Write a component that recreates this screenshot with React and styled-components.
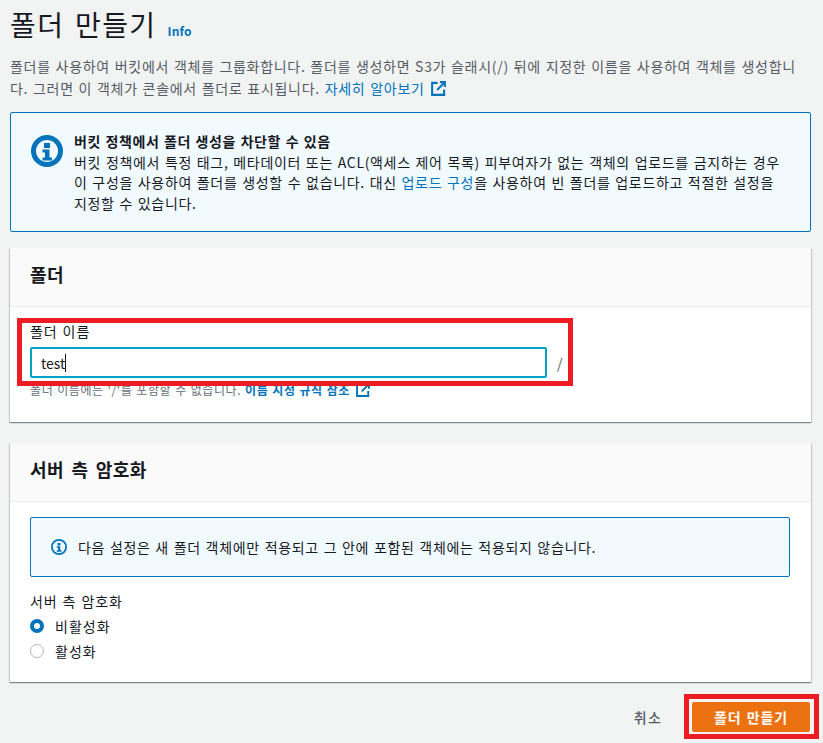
import React from "react";
import styled, { createGlobalStyle } from "styled-components";

const Global = createGlobalStyle`
  html, body { margin: 0; padding: 0; background: #f2f3f3; }
  body { font-family: "Noto Sans CJK KR", "Noto Sans", sans-serif; color: #16191f; }
  * { box-sizing: border-box; }
`;

const Page = styled.div`
  position: relative;
  width: 823px;
  height: 743px;
  overflow: hidden;
  padding: 4px 12px 0 10px;
`;
const TitleRow = styled.div`
  display: flex;
  align-items: baseline;
  gap: 11px;
  height: 44px;
`;
const Title = styled.h1`
  margin: 0;
  font-size: 28px;
  line-height: 40px;
  font-weight: 400;
  letter-spacing: 1.4px;
  word-spacing: 3px;
  color: #16191f;
`;
const InfoLink = styled.a`
  font-size: 12px;
  font-weight: 700;
  letter-spacing: 0.2px;
  color: #0073bb;
`;
const Description = styled.p`
  margin: 7px 0 0;
  font-size: 14px;
  line-height: 22px;
  letter-spacing: 0.7px;
  word-spacing: 1px;
  color: #545b64;
`;
const Link = styled.a`
  color: #0073bb;
  font-weight: ${(p) => (p.$bold ? 700 : 400)};
`;
const External = styled.svg`
  display: inline-block;
  width: ${(p) => p.$size || 15}px;
  height: ${(p) => p.$size || 15}px;
  margin-left: 6px;
  vertical-align: -2px;
`;
const Alert = styled.div`
  display: flex;
  background: #f1faff;
  border: 1px solid #0073bb;
  border-radius: 2px;
  gap: 11px;
  align-items: ${(p) => (p.$small ? "center" : "flex-start")};
  height: ${(p) => (p.$small ? 60 : 120)}px;
  margin-top: ${(p) => (p.$small ? 0 : 13)}px;
  padding: ${(p) => (p.$small ? "0 20px" : "18px 26px 0 20px")};
`;
const AlertIconSlot = styled.div`
  flex: none;
  margin-top: ${(p) => p.$top || 0}px;
  display: flex;
`;
const AlertText = styled.div`
  font-size: 14px;
  line-height: 20.5px;
  letter-spacing: 0.67px;
  word-spacing: 1px;
  color: #16191f;
`;
const AlertTitle = styled.div`
  font-weight: 700;
  letter-spacing: 0.55px;
`;
const Panel = styled.section`
  background: #fff;
  box-shadow: 0 1px 1px 0 rgba(0, 28, 36, 0.3), 1px 1px 1px 0 rgba(0, 28, 36, 0.15), -1px 1px 1px 0 rgba(0, 28, 36, 0.15);
  margin-top: ${(p) => p.$top}px;
  height: ${(p) => p.$height}px;
`;
const PanelHeader = styled.header`
  height: 59px;
  background: #fafafa;
  border-bottom: 1px solid #eaeded;
  padding: 0 20px 6px;
  display: flex;
  align-items: center;
`;
const PanelTitle = styled.h2`
  margin: 0;
  font-size: 18px;
  font-weight: 700;
  line-height: 24px;
  letter-spacing: 0.4px;
  word-spacing: 3px;
`;
const PanelBody = styled.div`
  padding: ${(p) => p.$pad};
`;
const Label = styled.div`
  font-size: 14px;
  line-height: 20px;
  letter-spacing: 0.9px;
  word-spacing: 1px;
  color: #16191f;
`;
const InputRow = styled.div`
  display: flex;
  align-items: center;
  gap: 10px;
  margin-top: 6px;
`;
const FakeInput = styled.div`
  width: 517px;
  height: 31px;
  border: 2px solid #00a1c9;
  border-radius: 2px;
  padding: 0 9px;
  display: flex;
  align-items: center;
  font-size: 14px;
  color: #16191f;
  background: #fff;
`;
const Caret = styled.span`
  display: inline-block;
  width: 1px;
  height: 18px;
  background: #16191f;
`;
const Slash = styled.span`
  font-size: 14px;
  color: #545b64;
`;
const Hint = styled.div`
  margin-top: 3px;
  font-size: 12px;
  line-height: 18px;
  letter-spacing: 0.6px;
  word-spacing: 0.6px;
  color: #687078;
`;
const FieldLabel = styled(Label)`
  margin-top: 14px;
`;
const RadioRow = styled.div`
  display: flex;
  align-items: center;
  gap: 11px;
  height: 25px;
  font-size: 14px;
  letter-spacing: 1px;
  color: #16191f;
`;
const RadioGroup = styled.div`
  margin-top: 2px;
`;
const Radio = styled.span`
  width: 14px;
  height: 14px;
  border-radius: 50%;
  background: #fff;
  border: ${(p) => (p.$on ? "4px solid #0073bb" : "1px solid #aab7b8")};
`;
const Footer = styled.footer`
  display: flex;
  align-items: center;
  justify-content: flex-end;
  margin-top: 20px;
  height: 30px;
  padding-right: 1px;
`;
const Cancel = styled.span`
  font-size: 14px;
  font-weight: 500;
  letter-spacing: 1.2px;
  color: #545b64;
  margin-right: 30px;
`;
const Primary = styled.button`
  width: 118px;
  height: 30px;
  border: 1px solid #ec7211;
  border-radius: 2px;
  background: #ec7211;
  color: #fff;
  font-family: inherit;
  font-size: 14px;
  font-weight: 700;
  letter-spacing: 0.9px;
  word-spacing: 1px;
  padding: 0;
`;
const Highlight = styled.div`
  position: absolute;
  border: 5px solid #ed1c24;
  left: ${(p) => p.$l}px;
  top: ${(p) => p.$t}px;
  width: ${(p) => p.$w}px;
  height: ${(p) => p.$h}px;
`;

const ExternalIcon = ({ size }) => (
  <External $size={size} viewBox="0 0 16 16" fill="none" stroke="#0073bb" strokeWidth="2.2">
    <path d="M7 2H1.2v12.8H14V9" />
    <path d="M9.5 1.2h5.3v5.3" />
    <path d="M14.5 1.5 6.5 9.5" />
  </External>
);

const InfoIcon = ({ size, sw }) => (
  <svg width={size} height={size} viewBox="0 0 32 32" style={{ flex: "none" }}>
    <circle cx="16" cy="16" r={16 - sw / 2} fill="none" stroke="#0073bb" strokeWidth={sw} />
    <rect x="13" y="8" width="6" height="5" fill="#0073bb" />
    <path d="M11.5 14.5h7v8h2.5v3H11.5v-3h2.5v-5h-2.5z" fill="#0073bb" />
  </svg>
);

export default function App() {
  return (
    <Page>
      <Global />
      <TitleRow>
        <Title>폴더 만들기</Title>
        <InfoLink>Info</InfoLink>
      </TitleRow>
      <Description>
        폴더를 사용하여 버킷에서 객체를 그룹화합니다. 폴더를 생성하면 S3가 슬래시(/) 뒤에 지정한 이름을 사용하여 객체를 생성합니다. 그러면 이 객체가 콘솔에서 폴더로 표시됩니다. <Link>자세히 알아보기</Link>
        <ExternalIcon />
      </Description>
      <Alert>
        <AlertIconSlot $top={4}>
          <InfoIcon size={32} sw={5} />
        </AlertIconSlot>
        <AlertText>
          <AlertTitle>버킷 정책에서 폴더 생성을 차단할 수 있음</AlertTitle>
          버킷 정책에서 특정 태그, 메타데이터 또는 ACL(액세스 제어 목록) 피부여자가 없는 객체의 업로드를 금지하는 경우 이 구성을 사용하여 폴더를 생성할 수 없습니다. 대신 <Link>업로드 구성</Link>을 사용하여 빈 폴더를 업로드하고 적절한 설정을 지정할 수 있습니다.
        </AlertText>
      </Alert>
      <Panel $top={16} $height={174}>
        <PanelHeader>
          <PanelTitle>폴더</PanelTitle>
        </PanelHeader>
        <PanelBody $pad="14px 20px 0">
          <Label>폴더 이름</Label>
          <InputRow>
            <FakeInput>
              test
              <Caret />
            </FakeInput>
            <Slash>/</Slash>
          </InputRow>
          <Hint>
            폴더 이름에는 '/'를 포함할 수 없습니다. <Link $bold>이름 지정 규칙 참조</Link>
            <ExternalIcon size={14} />
          </Hint>
        </PanelBody>
      </Panel>
      <Panel $top={21} $height={239}>
        <PanelHeader>
          <PanelTitle>서버 측 암호화</PanelTitle>
        </PanelHeader>
        <PanelBody $pad="15px 21px 0 20px">
          <Alert $small>
            <InfoIcon size={16} sw={3.5} />
            <AlertText>다음 설정은 새 폴더 객체에만 적용되고 그 안에 포함된 객체에는 적용되지 않습니다.</AlertText>
          </Alert>
          <FieldLabel>서버 측 암호화</FieldLabel>
          <RadioGroup>
            <RadioRow>
              <Radio $on />
              비활성화
            </RadioRow>
            <RadioRow>
              <Radio />
              활성화
            </RadioRow>
          </RadioGroup>
        </PanelBody>
      </Panel>
      <Footer>
        <Cancel>취소</Cancel>
        <Primary>폴더 만들기</Primary>
      </Footer>
      <Highlight $l={17} $t={318} $w={556} $h={68} />
      <Highlight $l={684} $t={694} $w={135} $h={45} />
    </Page>
  );
}
